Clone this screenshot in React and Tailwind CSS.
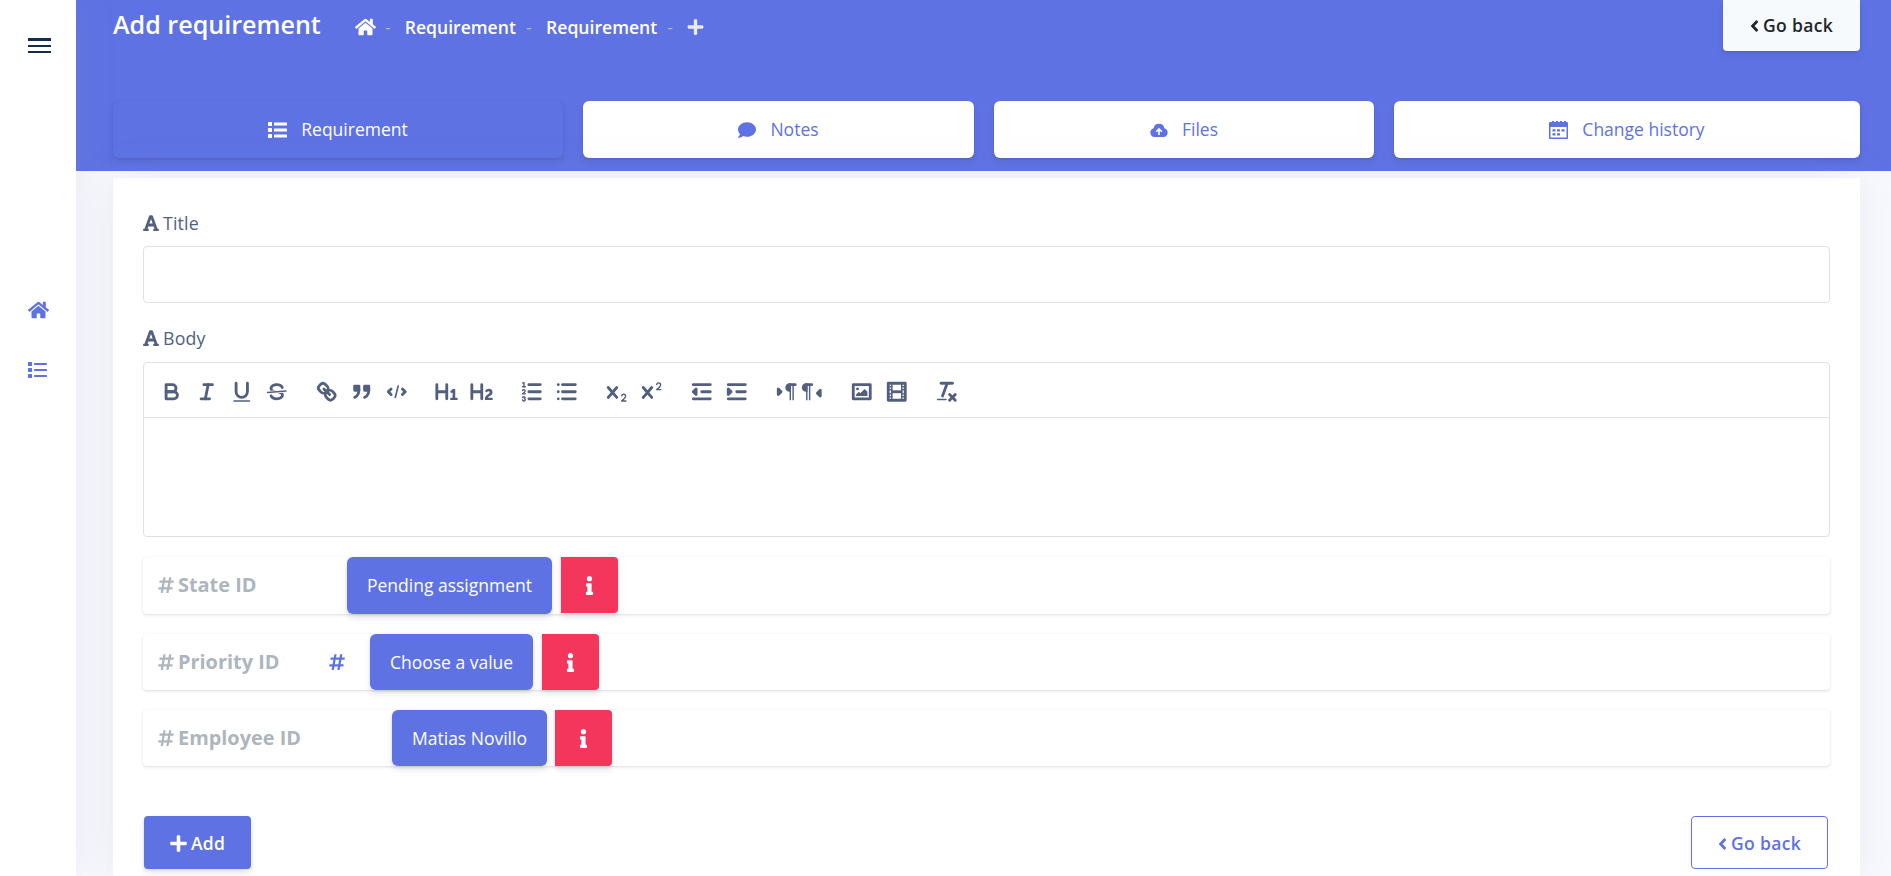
import { FaHome, FaComment, FaPlus, FaAngleLeft, FaFont, FaHashtag, FaInfo } from "react-icons/fa";

const INK = "#525f7f";

function S({ children, thin }) {
  return (
    <g fill="none" stroke={INK} strokeWidth={thin ? 1 : 2} strokeLinecap="round" strokeLinejoin="round">
      {children}
    </g>
  );
}

const HL = ({ a, b, y }) => <line x1={a} x2={b} y1={y} y2={y} />;
const BIG_X =
  "M9.65,5.241a1,1,0,0,0-1.409.108L6,7.964,3.759,5.349A1,1,0,0,0,2.192,6.592Q2.215,6.621,2.241,6.649L4.684,9.5,2.241,12.35A1,1,0,0,0,3.71,13.707q0.026-.028.049-0.057L6,11.036,8.241,13.65a1,1,0,1,0,1.567-1.243Q9.785,12.378,9.759,12.35L7.316,9.5,9.759,6.651A1,1,0,0,0,9.65,5.241Z";

const GROUPS = [
  [
    <S key="b">
      <path d="M5,4H9.5A2.5,2.5,0,0,1,12,6.5v0A2.5,2.5,0,0,1,9.5,9H5V4Z" />
      <path d="M5,9h5.5A2.5,2.5,0,0,1,13,11.5v0A2.5,2.5,0,0,1,10.5,14H5V9Z" />
    </S>,
    <S key="i">
      <HL a={7} b={13} y={4} />
      <HL a={5} b={11} y={14} />
      <line x1="8" x2="10" y1="14" y2="4" />
    </S>,
    <g key="u">
      <S><path d="M5,3V9a4.012,4.012,0,0,0,4,4H9a4.012,4.012,0,0,0,4-4V3" /></S>
      <rect height="1" rx="0.5" width="12" x="3" y="15" />
    </g>,
    <g key="s">
      <S thin><line x1="15.5" x2="2.5" y1="8.5" y2="9.5" /></S>
      <path d="M9.007,8C6.542,7.791,6,7.519,6,6.5,6,5.792,7.283,5,9,5c1.571,0,2.765.679,2.969,1.309a1,1,0,0,0,1.9-.617C13.356,4.106,11.354,3,9,3,6.2,3,4,4.538,4,6.5a3.2,3.2,0,0,0,.5,1.843Z" />
      <path d="M8.984,10C11.457,10.208,12,10.479,12,11.5c0,.708-1.283,1.5-3,1.5-1.571,0-2.765-.679-2.969-1.309a1,1,0,1,0-1.9.617C4.644,13.894,6.646,15,9,15c2.8,0,5-1.538,5-3.5a3.2,3.2,0,0,0-.5-1.843Z" />
    </g>,
  ],
  [
    <S key="l">
      <line x1="7" x2="11" y1="7" y2="11" />
      <path d="M8.9,4.577a3.476,3.476,0,0,1,.36,4.679A3.476,3.476,0,0,1,4.577,8.9C3.185,7.5,2.035,6.4,4.217,4.217S7.5,3.185,8.9,4.577Z" />
      <path d="M13.423,9.1a3.476,3.476,0,0,0-4.679-.36,3.476,3.476,0,0,0,.36,4.679c1.392,1.392,2.5,2.542,4.679.36S14.815,10.5,13.423,9.1Z" />
    </S>,
    <g key="q" stroke={INK} strokeWidth="2" strokeLinecap="round" strokeLinejoin="round">
      <rect height="3" width="3" x="4" y="5" />
      <rect height="3" width="3" x="11" y="5" />
      <path d="M7,8c0,4.031-3,5-3,5" />
      <path d="M14,8c0,4.031-3,5-3,5" />
    </g>,
    <S key="c">
      <polyline points="5 7 3 9 5 11" />
      <polyline points="13 7 15 9 13 11" />
      <line x1="10" x2="8" y1="5" y2="13" strokeWidth="1.2" />
    </S>,
  ],
  [
    <path key="h1" d="M10,4V14a1,1,0,0,1-2,0V10H3v4a1,1,0,0,1-2,0V4A1,1,0,0,1,3,4V8H8V4a1,1,0,0,1,2,0Zm6.06787,9.209H14.98975V7.59863a.54085.54085,0,0,0-.605-.60547h-.62744a1.01119,1.01119,0,0,0-.748.29688L11.645,8.56641a.5435.5435,0,0,0-.022.8584l.28613.30762a.53861.53861,0,0,0,.84717.0332l.09912-.08789a1.2137,1.2137,0,0,0,.2417-.35254h.02246s-.01123.30859-.01123.60547V13.209H12.041a.54085.54085,0,0,0-.605.60547v.43945a.54085.54085,0,0,0,.605.60547h4.02686a.54085.54085,0,0,0,.605-.60547v-.43945A.54085.54085,0,0,0,16.06787,13.209Z" />,
    <path key="h2" d="M16.73975,13.81445v.43945a.54085.54085,0,0,1-.605.60547H11.855a.58392.58392,0,0,1-.64893-.60547V14.0127c0-2.90527,3.39941-3.42187,3.39941-4.55469a.77675.77675,0,0,0-.84717-.78125,1.17684,1.17684,0,0,0-.83594.38477c-.2749.26367-.561.374-.85791.13184l-.4292-.34082c-.30811-.24219-.38525-.51758-.1543-.81445a2.97155,2.97155,0,0,1,2.45361-1.17676,2.45393,2.45393,0,0,1,2.68408,2.40918c0,2.45312-3.1792,2.92676-3.27832,3.93848h2.79443A.54085.54085,0,0,1,16.73975,13.81445ZM9,3A.99974.99974,0,0,0,8,4V8H3V4A1,1,0,0,0,1,4V14a1,1,0,0,0,2,0V10H8v4a1,1,0,0,0,2,0V4A.99974.99974,0,0,0,9,3Z" />,
  ],
  [
    <g key="ol">
      <S><HL a={7} b={15} y={4} /><HL a={7} b={15} y={9} /><HL a={7} b={15} y={14} /></S>
      <path d="M3.5,6A0.5,0.5,0,0,1,3,5.5V3.085l-0.276.138A0.5,0.5,0,0,1,2.053,3c-0.124-.247-0.023-0.324.224-0.447l1-.5A0.5,0.5,0,0,1,4,2.5v3A0.5,0.5,0,0,1,3.5,6Z" />
      <S thin>
        <HL a={2.5} b={4.5} y={5.5} />
        <path d="M4.5,10.5h-2c0-.234,1.85-1.076,1.85-2.234A0.959,0.959,0,0,0,2.5,8.156" />
        <path d="M2.5,14.846a0.959,0.959,0,0,0,1.85-.109A0.7,0.7,0,0,0,3.75,14a0.688,0.688,0,0,0,.6-0.736,0.959,0.959,0,0,0-1.85-.109" />
      </S>
    </g>,
    <S key="ul">
      <HL a={6} b={15} y={4} /><HL a={6} b={15} y={9} /><HL a={6} b={15} y={14} />
      <HL a={3} b={3} y={4} /><HL a={3} b={3} y={9} /><HL a={3} b={3} y={14} />
    </S>,
  ],
  [
    <g key="sub">
      <path d="M15.5,15H13.861a3.858,3.858,0,0,0,1.914-2.975,1.8,1.8,0,0,0-1.6-1.751A1.921,1.921,0,0,0,12.021,11.7a0.5,0.5,0,1,0,.957.291h0a0.914,0.914,0,0,1,1.053-.725,0.81,0.81,0,0,1,.744.762c0,1.076-1.17,1.87-1.94,2.431A1.456,1.456,0,0,0,12,15.5a0.5,0.5,0,0,0,.5.5h3A0.5,0.5,0,0,0,15.5,15Z" />
      <path d={BIG_X} />
    </g>,
    <g key="sup">
      <path d="M15.5,7H13.861a4.015,4.015,0,0,0,1.914-2.975,1.8,1.8,0,0,0-1.6-1.751A1.922,1.922,0,0,0,12.021,3.7a0.5,0.5,0,1,0,.957.291,0.917,0.917,0,0,1,1.053-.725,0.81,0.81,0,0,1,.744.762c0,1.077-1.164,1.925-1.934,2.486A1.423,1.423,0,0,0,12,7.5a0.5,0.5,0,0,0,.5.5h3A0.5,0.5,0,0,0,15.5,7Z" />
      <path d={BIG_X} />
    </g>,
  ],
  [
    <g key="out">
      <S><HL a={3} b={15} y={14} /><HL a={3} b={15} y={4} /><HL a={9} b={15} y={9} /><polygon fill={INK} points="5 7 5 11 3 9" /></S>
    </g>,
    <g key="in">
      <S><HL a={3} b={15} y={14} /><HL a={3} b={15} y={4} /><HL a={9} b={15} y={9} /><polygon fill={INK} points="3 7 3 11 5 9" /></S>
    </g>,
  ],
  [
    <g key="ltr">
      <S><polygon fill={INK} points="3 11 5 9 3 7" /><HL a={11} b={15} y={4} /></S>
      <path d="M11,3a3,3,0,0,0,0,6h1V3H11Z" />
      <rect height="11" width="1" x="11" y="4" /><rect height="11" width="1" x="13" y="4" />
    </g>,
    <g key="rtl">
      <S><polygon fill={INK} points="15 12 13 10 15 8" /><HL a={5} b={9} y={4} /></S>
      <path d="M5,3A3,3,0,0,0,5,9H6V3H5Z" />
      <rect height="11" width="1" x="5" y="4" /><rect height="11" width="1" x="7" y="4" />
    </g>,
  ],
  [
    <g key="img">
      <S><rect height="10" width="12" x="3" y="4" /></S>
      <circle cx="6" cy="7" r="1" />
      <polygon points="5 12 5 11 7 9 8 10 11 7 13 9 13 12" />
    </g>,
    <g key="vid">
      <S><rect height="12" width="12" x="3" y="3" /></S>
      <rect height="12" width="1" x="5" y="3" /><rect height="12" width="1" x="12" y="3" />
      <rect height="2" width="8" x="5" y="8" />
      {[5, 7, 10, 12].map((y) => (
        <g key={y}><rect height="1" width="3" x="3" y={y} /><rect height="1" width="3" x="12" y={y} /></g>
      ))}
    </g>,
  ],
  [
    <g key="clean">
      <S>
        <HL a={5} b={13} y={3} />
        <line x1="6" x2="9.35" y1="12" y2="3" />
        <line x1="11" x2="15" y1="11" y2="15" /><line x1="15" x2="11" y1="11" y2="15" />
      </S>
      <rect height="1" rx="0.5" width="7" x="2" y="14" />
    </g>,
  ],
];

function CalendarGrid() {
  return (
    <svg className="h-[18px] w-[19px]" viewBox="0 0 19 18" fill="#5e72e4">
      <path fillRule="evenodd" d="M1 1h2V0h2v1h2V0h2v1h2V0h2v1h2V0h2v1h1a1 1 0 0 1 1 1v15a1 1 0 0 1-1 1H1a1 1 0 0 1-1-1V2a1 1 0 0 1 1-1zM1.5 6v10.5h16V6z" />
      <path d="M3.5 8.2h3v2.2h-3zM8 8.2h3v2.2H8zM12.5 8.2h3v2.2h-3zM3.5 12.2h3v2.2h-3zM8 12.2h3v2.2H8z" />
    </svg>
  );
}

function CloudUpload() {
  return (
    <svg className="h-[18px] w-[18px]" viewBox="0 0 18 18">
      <path fill="#5e72e4" d="M14.4 7.2A5.5 5.5 0 0 0 3.6 7.2 4.5 4.5 0 0 0 4.500 16h9a4.500 4.500 0 0 0 .9-8.800z" />
      <path fill="none" stroke="#fff" strokeWidth="1.6" d="M9 14V8.400M6.200 10.800L9 8l2.800 2.800" />
    </svg>
  );
}

function BulletList() {
  return (
    <svg className="h-[16px] w-[19px]" viewBox="0 0 19 16" fill="currentColor">
      <rect width="4" height="4" rx=".6" y="0" /><rect x="6" y=".5" width="13" height="3" rx=".6" />
      <rect width="4" height="4" rx=".6" y="6" /><rect x="6" y="6.500" width="13" height="3" rx=".6" />
      <rect width="4" height="4" rx=".6" y="12" /><rect x="6" y="12.500" width="13" height="3" rx=".6" />
    </svg>
  );
}

function SidebarList() {
  return (
    <svg className="mt-[42px] h-[16px] w-[19px]" viewBox="0 0 19 16" fill="currentColor">
      <rect width="4" height="4" rx=".5" y="0" /><rect x="6" y="1" width="13" height="2" rx=".4" />
      <rect width="4" height="4" rx=".5" y="6" /><rect x="6" y="7" width="13" height="2" rx=".4" />
      <rect width="4" height="4" rx=".5" y="12" /><rect x="6" y="13" width="13" height="2" rx=".4" />
    </svg>
  );
}

function Tab({ icon, label, className }) {
  return (
    <div className={`flex h-[57px] items-center justify-center gap-[14px] rounded-md text-[17.5px] shadow-[0_4px_6px_rgba(50,50,93,.11),0_1px_3px_rgba(0,0,0,.08)] ${className}`}>
      {icon}
      <span>{label}</span>
    </div>
  );
}

function FieldRow({ label, labelWidth, hash, value, valueClass, infoGap, className }) {
  return (
    <div className={`flex items-start rounded shadow-[0_1px_3px_rgba(50,50,93,.15),0_1px_0_rgba(0,0,0,.02)] ${className}`}>
      <div className={`flex h-14 items-center gap-[4px] pl-[15px] text-[#adb5bd] ${labelWidth}`}>
        <FaHashtag className="h-[18px] w-[16px]" />
        <span className="text-[19.9px] font-bold">{label}</span>
        {hash && <FaHashtag className="mr-[25px] ml-auto h-[18px] w-[16px] text-[#5e72e4]" />}
      </div>
      <div className={`flex h-full items-center justify-center rounded-md bg-[#5e72e4] text-[17.5px] text-white shadow-[0_4px_6px_rgba(50,50,93,.11),0_1px_3px_rgba(0,0,0,.08)] ${valueClass}`}>
        {value}
      </div>
      <div className={`flex h-14 w-[57px] items-center justify-center rounded-r bg-[#f5365c] pr-[1px] text-white shadow-[0_4px_6px_rgba(50,50,93,.11),0_1px_3px_rgba(0,0,0,.08)] ${infoGap}`}>
        <FaInfo className="h-[19px] w-[19px]" />
      </div>
    </div>
  );
}

function FieldLabel({ children }) {
  return (
    <div className="flex h-[26px] items-center gap-[4px] text-[17.8px] font-medium tracking-[.15px] text-[#525f7f]">
      <FaFont className="h-[18px] w-[16px]" />
      <span>{children}</span>
    </div>
  );
}

export default function App() {
  return (
    <div className="flex h-[876px] w-full overflow-hidden bg-[#f8f9fe] font-['Open_Sans',sans-serif]">
      <aside className="relative z-10 flex w-[76px] shrink-0 flex-col bg-white pl-[28px] text-[#5e72e4] shadow-[0_0_40px_rgba(136,152,170,.15)]">
        <div className="mt-[38px] flex w-[23px] flex-col">
          <div className="h-[3px] bg-[#172b4d]" />
          <div className="mt-[4px] h-[2px] bg-[#172b4d]" />
          <div className="mt-[4px] h-[2px] bg-[#172b4d]" />
        </div>
        <FaHome className="mt-[247px] h-[20px] w-[21px]" />
        <SidebarList />
      </aside>

      <main className="flex min-w-0 flex-1 flex-col">
        <header className="h-[171px] bg-[#5e72e4] pr-[31px] pl-[37px]">
          <div className="flex h-[101px] items-start text-white">
            <h1 className="mt-[8px] w-[242px] text-[25.1px] leading-[33px] font-semibold">Add requirement</h1>
            <nav className="mt-[14px] flex h-[26px] items-center text-[17.6px] font-semibold">
              <FaHome className="h-[20px] w-[21px]" />
              <span className="ml-[9px] text-[#adb5bd] font-normal">-</span>
              <span className="ml-[14px]">Requirement</span>
              <span className="ml-[10px] text-[#adb5bd] font-normal">-</span>
              <span className="ml-[14.5px]">Requirement</span>
              <span className="ml-[10px] text-[#adb5bd] font-normal">-</span>
              <FaPlus className="ml-[14px] h-[18px] w-[17px] text-[#e9ecef]" />
            </nav>
            <button className="ml-auto flex h-[51px] w-[137px] items-center justify-center gap-[4px] rounded-b bg-[#f7fafc] text-[17.5px] font-semibold tracking-[.35px] text-[#212529] shadow-[0_4px_6px_rgba(50,50,93,.11),0_1px_3px_rgba(0,0,0,.08)]">
              <FaAngleLeft className="h-[18px] w-[9px]" />
              Go back
            </button>
          </div>
          <div className="flex gap-5">
            <Tab className="w-[450px] bg-[#5e72e4] text-white" icon={<BulletList />} label="Requirement" />
            <Tab className="w-[391px] bg-white text-[#5e72e4]" icon={<FaComment className="h-[18px] w-[18px]" />} label="Notes" />
            <Tab className="w-[380px] bg-white text-[#5e72e4]" icon={<CloudUpload />} label="Files" />
            <Tab className="w-[466px] bg-white text-[#5e72e4]" icon={<CalendarGrid />} label="Change history" />
          </div>
        </header>

        <section className="mt-[7px] mr-[31px] ml-[37px] flex flex-1 flex-col bg-white px-[30px] pt-[32px] shadow-[0_0_40px_rgba(136,152,170,.15)]">
          <FieldLabel>Title</FieldLabel>
          <div className="mt-[10px] h-[57px] rounded border border-[#dee2e6]" />
          <div className="mt-[22px]"><FieldLabel>Body</FieldLabel></div>
          <div className="mt-[11px] h-[175px] rounded border border-[#dee2e6]">
            <div className="flex h-[55px] items-center gap-[15px] border-b border-[#dee2e6] pt-[3px] pl-[10px]">
              {GROUPS.map((group, i) => (
                <div key={i} className="flex">
                  {group.map((icon, j) => (
                    <span key={j} className={`flex w-[35px] justify-center ${icon.key === "rtl" ? "-ml-[10px]" : ""}`}>
                      <svg className="h-[25.5px] w-[25.5px]" viewBox="0 0 18 18" fill={INK}>{icon}</svg>
                    </span>
                  ))}
                </div>
              ))}
            </div>
          </div>

          <FieldRow className="mt-5 h-[57px]" label="State ID" labelWidth="w-[204px]" value="Pending assignment" valueClass="w-[205px]" infoGap="ml-[9px]" />
          <FieldRow className="mt-5 h-[56px]" label="Priority ID" hash labelWidth="w-[227px]" value="Choose a value" valueClass="w-[163px]" infoGap="ml-[9px]" />
          <FieldRow className="mt-5 h-[56px]" label="Employee ID" labelWidth="w-[249px]" value="Matias Novillo" valueClass="w-[155px]" infoGap="ml-[8px]" />

          <div className="mt-[50px] flex justify-between pr-[2px] pl-[1px] text-[17.5px] font-semibold">
            <button className="flex h-[53px] w-[107px] items-center justify-center gap-[4px] rounded bg-[#5e72e4] pt-[2px] tracking-[.2px] text-white shadow-[0_4px_6px_rgba(50,50,93,.11),0_1px_3px_rgba(0,0,0,.08)]">
              <FaPlus className="h-[19px] w-[17px]" />
              Add
            </button>
            <button className="flex h-[53px] w-[137px] items-center justify-center gap-[4px] rounded border border-[#5e72e4] pt-[2px] tracking-[.35px] text-[#5e72e4]">
              <FaAngleLeft className="h-[18px] w-[9px]" />
              Go back
            </button>
          </div>
        </section>
      </main>
    </div>
  );
}
